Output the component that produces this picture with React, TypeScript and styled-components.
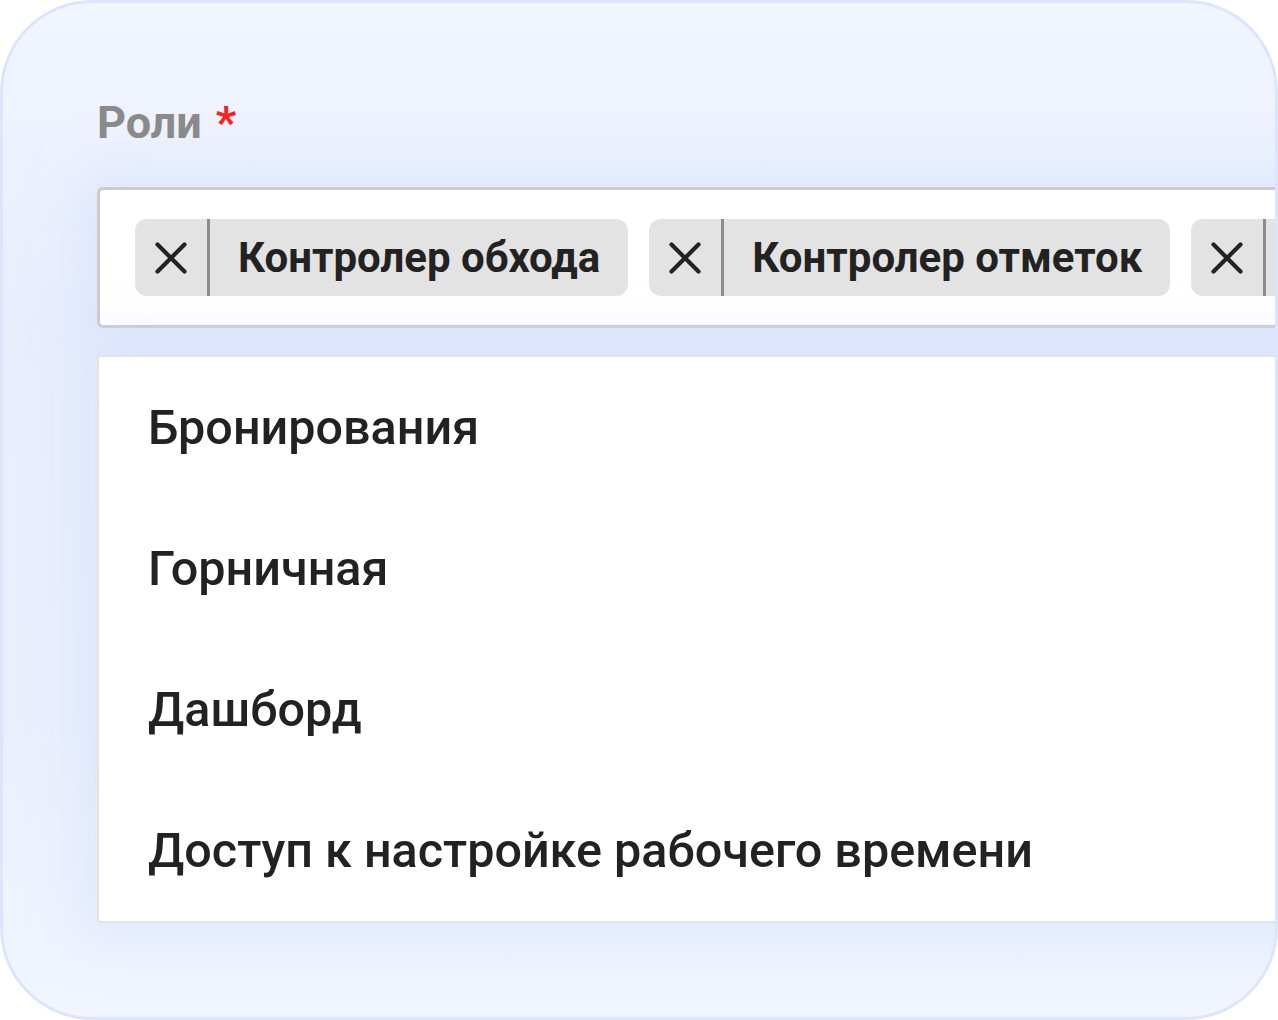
import * as React from 'react';
import styled, { createGlobalStyle } from 'styled-components';

const GlobalStyle = createGlobalStyle`
  html, body {
    margin: 0;
    padding: 0;
    background: #ffffff;
  }
  * {
    box-sizing: border-box;
  }
`;

const Card = styled.div`
  width: 1278px;
  height: 1020px;
  border: 3px solid #dce5fb;
  border-radius: 92px;
  overflow: hidden;
  background: linear-gradient(180deg, #f1f5fe 0%, #e8eefd 30%, #e9effd 70%, #f1f5fe 100%);
  padding: 92px 0 0 94px;
  font-family: Roboto, "Noto Sans", sans-serif;
`;

const Label = styled.div`
  font-size: 45px;
  line-height: 56px;
  font-weight: 700;
  color: #8a8a8a;
  margin-bottom: 36px;
  white-space: nowrap;
`;

const Required = styled.span`
  color: #f2241c;
  margin-left: 14px;
`;

const Field = styled.div`
  width: 1400px;
`;

const Input = styled.div`
  display: flex;
  flex-wrap: nowrap;
  gap: 21px;
  height: 141px;
  padding: 29px 35px;
  background: #ffffff;
  border: 3px solid #cbcbcb;
  border-radius: 6px;
  box-shadow: 0 0 50px 14px rgba(210, 222, 252, 0.55);
`;

const Chip = styled.div`
  display: flex;
  flex-shrink: 0;
  align-items: stretch;
  height: 77px;
  background: #e2e3e2;
  border-radius: 12px;
  overflow: hidden;
`;

const ChipClose = styled.button`
  display: flex;
  align-items: center;
  justify-content: center;
  width: 75px;
  padding: 0;
  border: none;
  border-right: 3px solid #8c8c8c;
  background: transparent;
  color: #222222;
  cursor: pointer;
`;

const ChipText = styled.span`
  display: flex;
  align-items: center;
  padding: 0 28px 0 28px;
  font-size: 42px;
  font-weight: 700;
  color: #222222;
  white-space: nowrap;
`;

const Dropdown = styled.ul`
  list-style: none;
  margin: 27px 0 0;
  padding: 0;
  background: #ffffff;
  border: 2px solid #e3e3e3;
  border-radius: 4px;
  box-shadow: 0 0 50px 14px rgba(210, 222, 252, 0.55);
`;

const Option = styled.li`
  height: 141px;
  line-height: 141px;
  padding-left: 49px;
  font-size: 48.5px;
  font-weight: 500;
  color: #222222;
  white-space: nowrap;
`;

const CloseIcon: React.FC = () => (
  <svg width="32" height="32" viewBox="0 0 32 32" fill="none">
    <path d="M2.5 2.5L29.5 29.5M29.5 2.5L2.5 29.5" stroke="currentColor" strokeWidth="4.2" strokeLinecap="round" />
  </svg>
);

const selected = ['Контролер обхода', 'Контролер отметок', 'Менеджер'];
const options = ['Бронирования', 'Горничная', 'Дашборд', 'Доступ к настройке рабочего времени'];

export default function App(): React.ReactElement {
  return (
    <>
      <GlobalStyle />
      <Card>
        <Label>
          Роли
          <Required>*</Required>
        </Label>
        <Field>
          <Input>
            {selected.map((role) => (
              <Chip key={role}>
                <ChipClose type="button" aria-label="Удалить">
                  <CloseIcon />
                </ChipClose>
                <ChipText>{role}</ChipText>
              </Chip>
            ))}
          </Input>
          <Dropdown>
            {options.map((opt) => (
              <Option key={opt}>{opt}</Option>
            ))}
          </Dropdown>
        </Field>
      </Card>
    </>
  );
}
